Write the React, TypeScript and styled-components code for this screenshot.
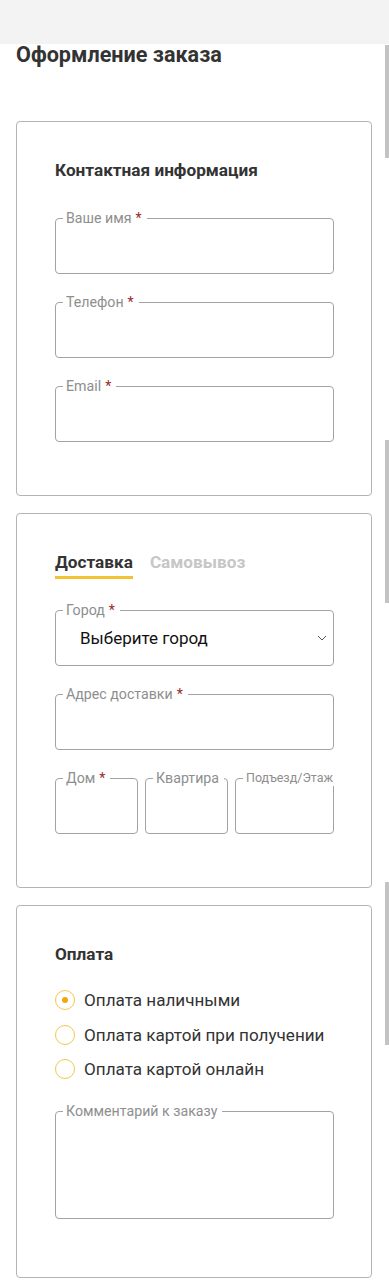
import React from "react";
import styled, { createGlobalStyle } from "styled-components";

const GlobalStyle = createGlobalStyle`
  html, body {
    margin: 0;
    padding: 0;
    background: #fff;
  }
  body {
    font-family: Roboto, "Noto Sans", "Liberation Sans", sans-serif;
    color: #333;
  }
  * { box-sizing: border-box; }
`;

const Page = styled.div`
  position: relative;
  width: 389px;
  min-height: 1280px;
  background: #fff;
`;

const TopBar = styled.div`
  height: 44px;
  background: #f3f3f3;
`;

const Content = styled.div`
  padding: 0 17px 0 16px;
`;

const Title = styled.h1`
  margin: -1px 0 0;
  font-size: 21.6px;
  line-height: 24px;
  font-weight: 700;
  color: #333;
`;

const Cards = styled.div`
  display: flex;
  flex-direction: column;
  gap: 17px;
  margin-top: 54px;
`;

const Card = styled.section<{ $bottom: number }>`
  border: 1px solid #b4b4b4;
  border-radius: 4px;
  padding: 38px 37px ${(p) => p.$bottom}px 38px;
  display: flex;
  flex-direction: column;
`;

const Heading = styled.h2<{ $gap: number }>`
  margin: 0 0 ${(p) => p.$gap}px;
  font-size: 17.2px;
  line-height: 20px;
  font-weight: 700;
  color: #333;
`;

const Fields = styled.div`
  display: flex;
  flex-direction: column;
  gap: 20px;
`;

const Field = styled.fieldset<{ $small?: boolean }>`
  margin: 0;
  padding: 0;
  min-width: 0;
  flex: 1;
  border: 1px solid #a3a3a3;
  border-radius: 4px;
  legend {
    margin-left: 7px;
    padding: 0 5px 0 3px;
    font-size: ${(p) => (p.$small ? "12.5px" : "14.2px")};
    line-height: 16px;
    color: #8e8e8e;
    white-space: nowrap;
  }
`;

const Star = styled.span`
  color: #9a2a2a;
  margin-left: 4px;
`;

const Input = styled.input`
  display: block;
  width: 100%;
  height: 47px;
  border: 0;
  outline: none;
  background: transparent;
  padding: 0 12px;
  font: inherit;
`;

const TextArea = styled.textarea`
  display: block;
  width: 100%;
  height: 99px;
  border: 0;
  outline: none;
  resize: none;
  background: transparent;
  padding: 8px 12px;
  font: inherit;
`;

const SelectBox = styled.div`
  height: 47px;
  display: flex;
  align-items: center;
  justify-content: space-between;
  padding: 0 6px 8px 24px;
  font-size: 17px;
  color: #111;
`;

const Row = styled.div`
  display: grid;
  grid-template-columns: 83px 83px 1fr;
  gap: 7px;
`;

const Tabs = styled.div`
  display: flex;
  gap: 17px;
  margin-bottom: 23px;
`;

const Tab = styled.div<{ $active?: boolean }>`
  font-size: 17.2px;
  line-height: 20px;
  font-weight: 700;
  padding-bottom: 4px;
  color: ${(p) => (p.$active ? "#333" : "#c6c6c6")};
  border-bottom: 3px solid ${(p) => (p.$active ? "#f1c232" : "transparent")};
`;

const Radios = styled.div`
  display: flex;
  flex-direction: column;
  gap: 14.5px;
  margin: 0 0 24px;
`;

const RadioRow = styled.label`
  display: flex;
  align-items: center;
  gap: 9px;
  font-size: 17.1px;
  line-height: 20px;
  color: #333;
`;

const Circle = styled.span<{ $checked?: boolean }>`
  width: 20px;
  height: 20px;
  flex: none;
  border-radius: 50%;
  border: 1.5px solid #f1c84a;
  display: flex;
  align-items: center;
  justify-content: center;
  &::after {
    content: "";
    width: 6px;
    height: 6px;
    border-radius: 50%;
    background: ${(p) => (p.$checked ? "#f0a70a" : "transparent")};
  }
`;

const Rail = styled.div`
  position: absolute;
  top: 0;
  right: 0;
  width: 4px;
  height: 100%;
`;

const Thumb = styled.div`
  position: absolute;
  left: 0;
  width: 4px;
  background: #c3c3c3;
`;

const Chevron = () => (
  <svg width="10" height="6" viewBox="0 0 10 6" fill="none">
    <path d="M1 1l4 4 4-4" stroke="#555" strokeWidth="1" />
  </svg>
);

function TextField({ label, required, small }: { label: string; required?: boolean; small?: boolean }) {
  return (
    <Field $small={small}>
      <legend>
        {label}
        {required && <Star>*</Star>}
      </legend>
      <Input />
    </Field>
  );
}

const payments = ["Оплата наличными", "Оплата картой при получении", "Оплата картой онлайн"];

export default function App() {
  return (
    <Page>
      <GlobalStyle />
      <TopBar />
      <Content>
        <Title>Оформление заказа</Title>
        <Cards>
          <Card $bottom={53}>
            <Heading $gap={30}>Контактная информация</Heading>
            <Fields>
              <TextField label="Ваше имя" required />
              <TextField label="Телефон" required />
              <TextField label="Email" required />
            </Fields>
          </Card>

          <Card $bottom={53}>
            <Tabs>
              <Tab $active>Доставка</Tab>
              <Tab>Самовывоз</Tab>
            </Tabs>
            <Fields>
              <Field>
                <legend>
                  Город<Star>*</Star>
                </legend>
                <SelectBox>
                  <span>Выберите город</span>
                  <Chevron />
                </SelectBox>
              </Field>
              <TextField label="Адрес доставки" required />
              <Row>
                <TextField label="Дом" required />
                <TextField label="Квартира" />
                <TextField label="Подъезд/Этаж" small />
              </Row>
            </Fields>
          </Card>

          <Card $bottom={58}>
            <Heading $gap={26}>Оплата</Heading>
            <Radios>
              {payments.map((p, i) => (
                <RadioRow key={p}>
                  <Circle $checked={i === 0} />
                  {p}
                </RadioRow>
              ))}
            </Radios>
            <Field>
              <legend>Комментарий к заказу</legend>
              <TextArea />
            </Field>
          </Card>
        </Cards>
      </Content>
      <Rail>
        <Thumb style={{ top: 45, height: 113 }} />
        <Thumb style={{ top: 440, height: 163 }} />
        <Thumb style={{ top: 882, height: 163 }} />
      </Rail>
    </Page>
  );
}
